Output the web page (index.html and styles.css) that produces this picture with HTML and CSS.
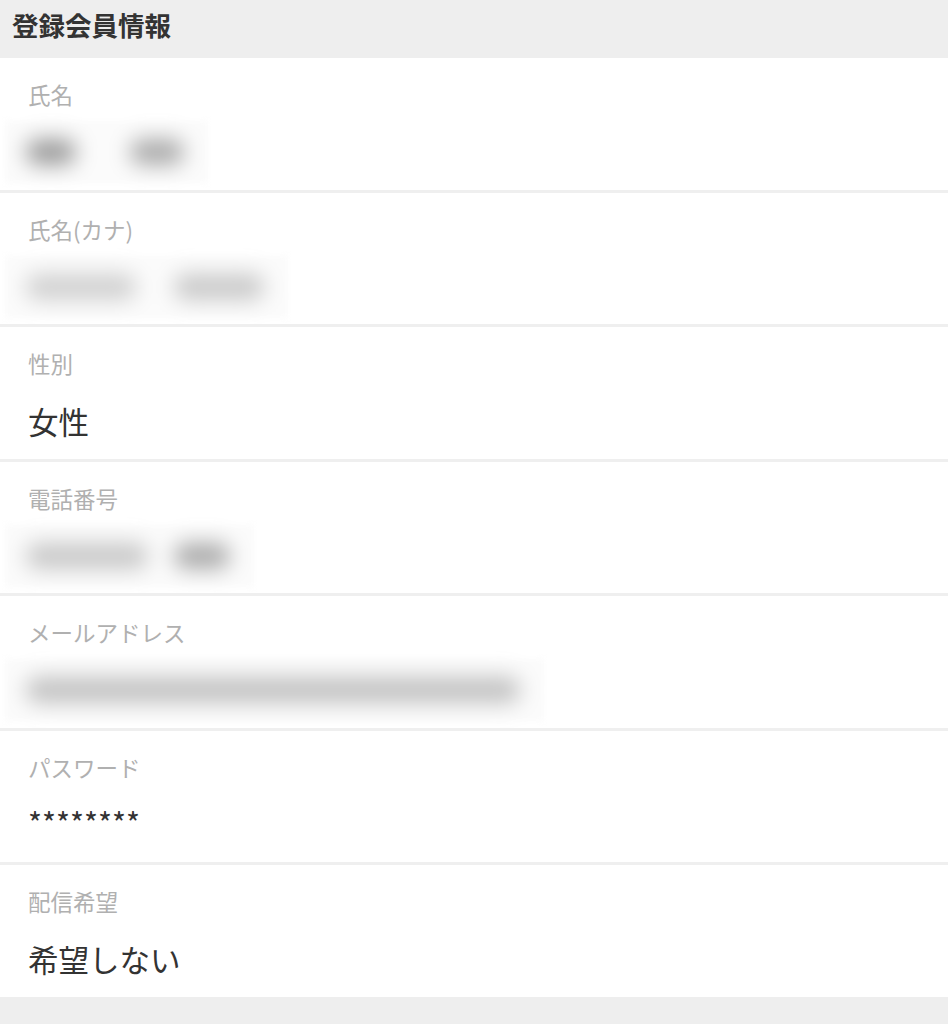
FILE: index.html
```html
<!DOCTYPE html>
<html lang="ja">
<head>
<meta charset="utf-8">
<title>登録会員情報</title>
<link rel="stylesheet" href="styles.css">
</head>
<body>
<header class="header">登録会員情報</header>
<main class="list">
  <section class="row">
    <div class="label">氏名</div>
    <div class="value">
      <div class="blur blur-name">
        <span class="blob b-dark" style="width:50px"></span>
        <span class="blob b-dark2" style="width:54px"></span>
      </div>
    </div>
  </section>
  <section class="row">
    <div class="label">氏名(カナ)</div>
    <div class="value">
      <div class="blur blur-kana">
        <span class="blob b-light" style="width:110px"></span>
        <span class="blob b-light2" style="width:90px"></span>
      </div>
    </div>
  </section>
  <section class="row">
    <div class="label">性別</div>
    <div class="value">女性</div>
  </section>
  <section class="row">
    <div class="label">電話番号</div>
    <div class="value">
      <div class="blur blur-tel">
        <span class="blob b-light3" style="width:122px"></span>
        <span class="blob b-mid" style="width:56px"></span>
      </div>
    </div>
  </section>
  <section class="row">
    <div class="label">メールアドレス</div>
    <div class="value">
      <div class="blur blur-mail">
        <span class="blob b-mail" style="width:494px"></span>
      </div>
    </div>
  </section>
  <section class="row">
    <div class="label">パスワード</div>
    <div class="value pw">********</div>
  </section>
  <section class="row">
    <div class="label">配信希望</div>
    <div class="value">希望しない</div>
  </section>
</main>
</body>
</html>
```
FILE: styles.css
```css
html, body {
  margin: 0;
  padding: 0;
}
body {
  background: #eeeeee;
  font-family: "Noto Sans CJK JP", "Noto Sans", sans-serif;
  color: #333333;
}
.header {
  height: 58px;
  box-sizing: border-box;
  padding: 8px 0 0 12px;
  font-size: 26.5px;
  font-weight: 700;
  line-height: 34px;
  color: #333333;
  background: #eeeeee;
}
.list {
  display: flex;
  flex-direction: column;
  gap: 3px;
  background: #efefef;
}
.row {
  height: 131.5px;
  box-sizing: border-box;
  padding: 21px 0 0 28px;
  background: #ffffff;
  overflow: hidden;
}
.label {
  font-size: 22.5px;
  line-height: 30px;
  color: #b0b0b0;
}
.value {
  margin-top: 23px;
  font-size: 30.5px;
  line-height: 40px;
  color: #333333;
}
.value.pw {
  margin-top: 20px;
  font-size: 30px;
}
.blur {
  display: flex;
  align-items: center;
  height: 62px;
  margin: -11px 0 -11px -23px;
  padding: 0 24px 0 21px;
  width: max-content;
  background: #fbfbfb;
  filter: blur(3px);
}
.blur-name { gap: 54px; }
.blur-kana { gap: 38px; }
.blur-tel { gap: 26px; }
.blob {
  display: block;
  height: 26px;
  border-radius: 13px;
  filter: blur(10px);
}
.b-dark { background: #9c9c9c; }
.b-dark2 { background: #ababab; }
.b-light { background: #d0d0d0; }
.b-light2 { background: #c9c9c9; }
.b-light3 { background: #c8c8c8; }
.b-mid { background: #ababab; }
.b-mail { background: #c2c2c2; }
```
